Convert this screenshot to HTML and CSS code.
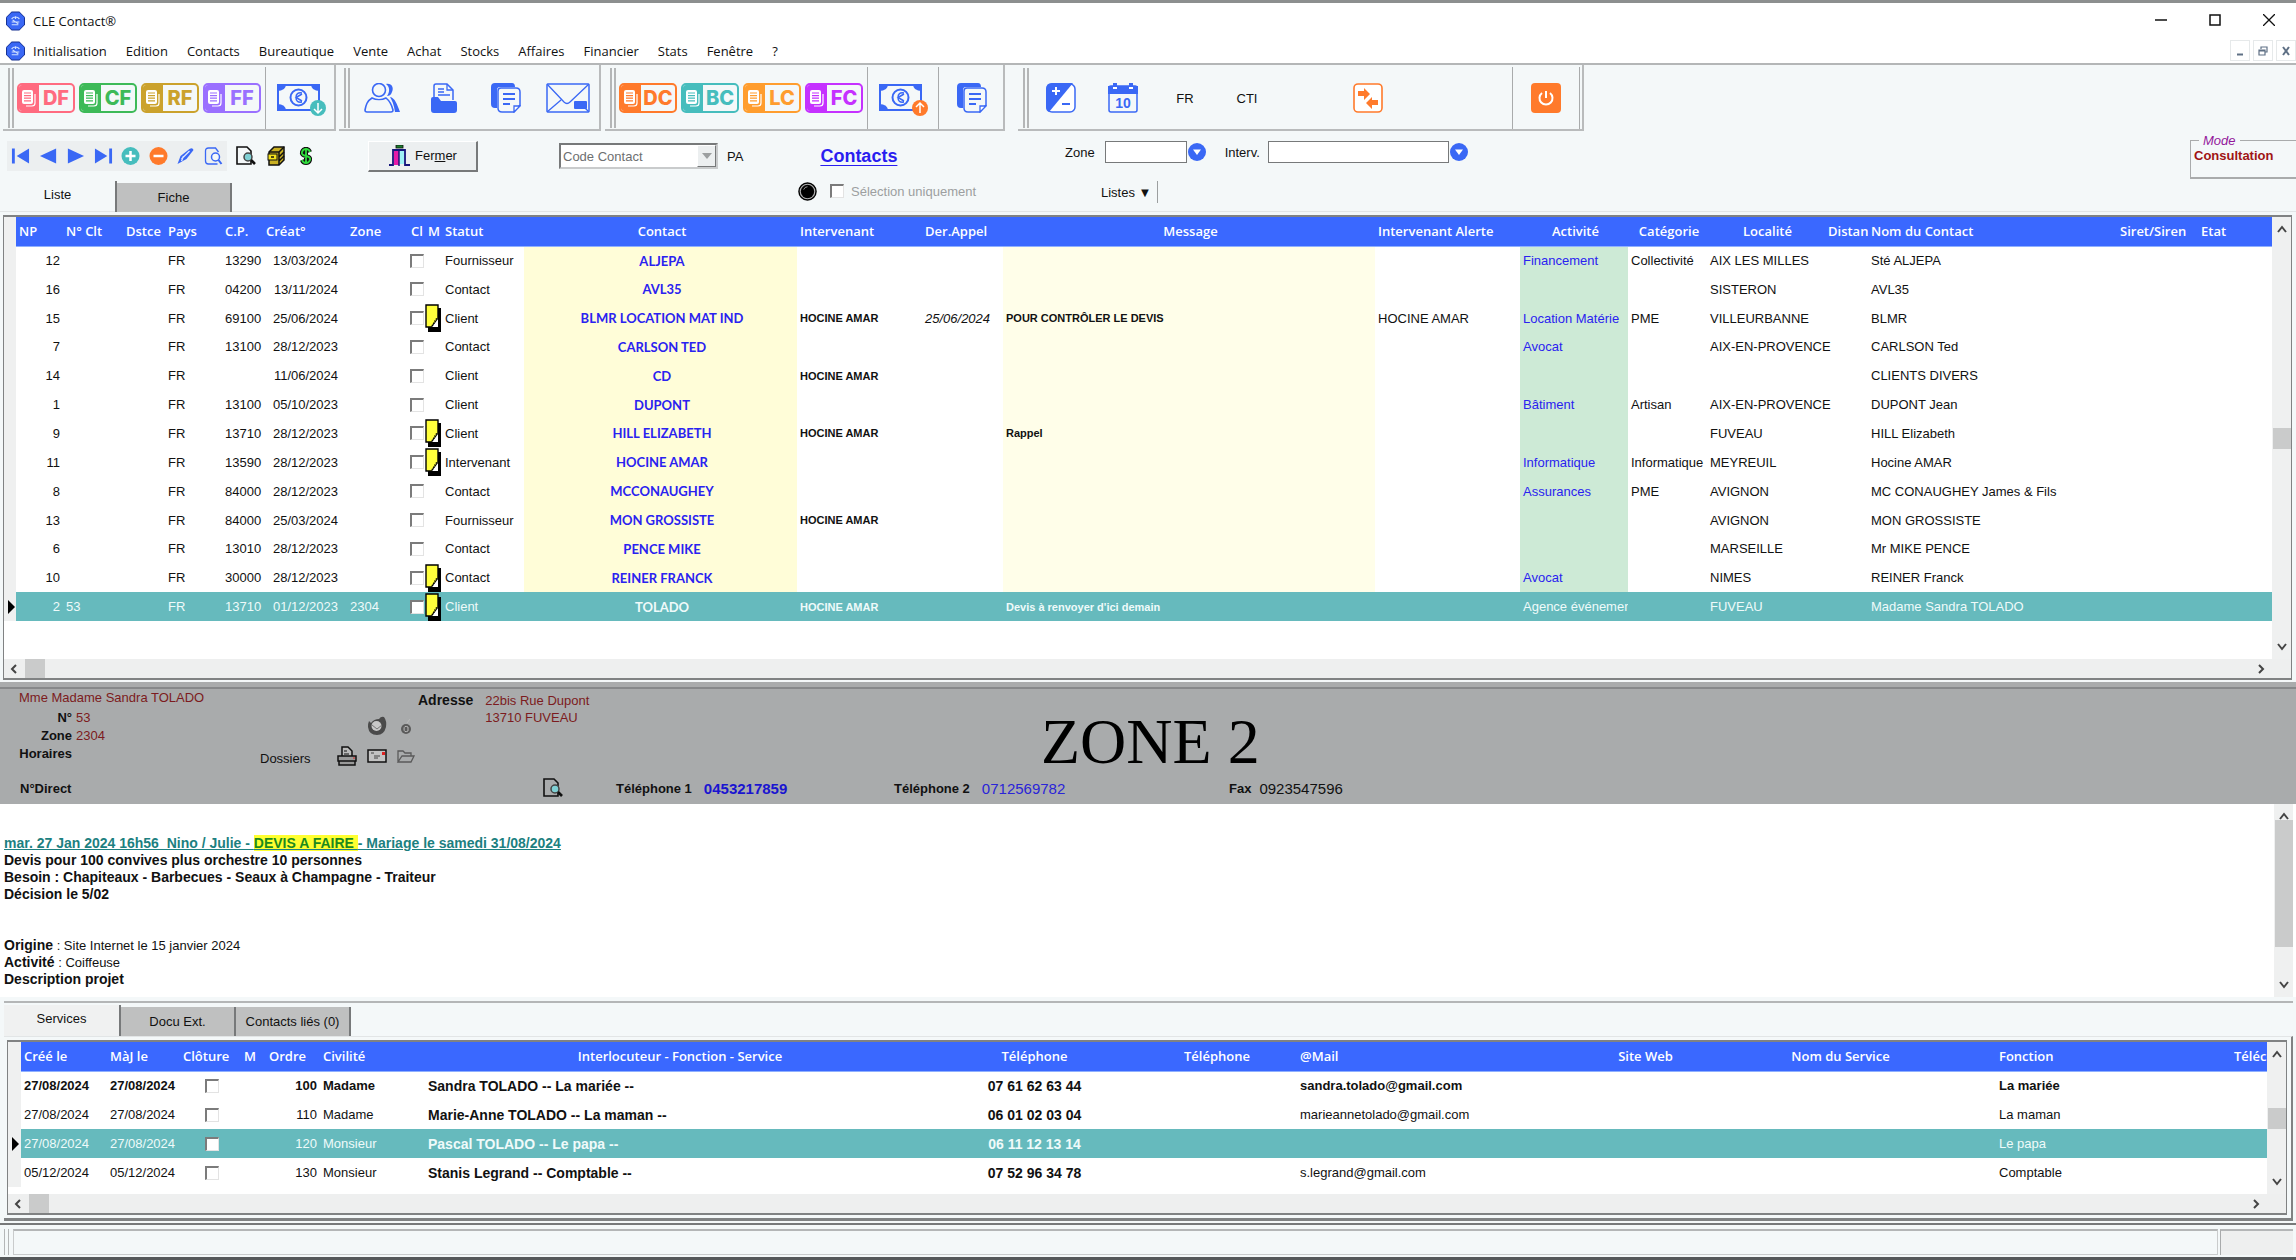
FILE: index.html
```html
<!DOCTYPE html>
<html lang="fr">
<head>
    <meta charset="UTF-8">
    <meta name="viewport" content="width=device-width, initial-scale=1.0">
    <title>CLE Contact</title>
    <link rel="stylesheet" href="styles.css">
</head>
<body>
    <!-- Icônes partagées -->
    <svg class="sprite" aria-hidden="true">
        <symbol id="i-app" viewBox="0 0 20 20">
            <path d="M6 0h8l6 6v8l-6 6H6l-6-6V6z" fill="#16308f"/>
            <path d="M6 1h8l5 5v8l-5 5H6l-5-5V6z" fill="#3a68f5"/>
            <path d="M6 8c1-3 7-3 8 0M6 11h8M6 14h7M7 9l6 4M10 5v3" fill="none" stroke="#cfe0ff" stroke-width="1.2"/>
        </symbol>
        <symbol id="i-doc" viewBox="0 0 14 17">
            <path d="M4 16h6q3 0 3-3V4" fill="none" stroke="#fff" stroke-width="1.200"/>
            <rect x="0" y="0" width="11" height="14" rx="2" fill="#fff"/>
            <path d="M2 3h7M2 5.600h7M2 8.200h7M2 10.800h7" stroke="currentColor" stroke-width="1.200"/>
        </symbol>
        <symbol id="i-money" viewBox="0 0 50 34">
            <rect x="2" y="2" width="41" height="25" fill="none" stroke="#3a68f5" stroke-width="2"/>
            <path d="M1 1h9q0 7-9 7zM44 1h-9q0 7 9 7zM1 28h9q0-7-9-7zM44 28h-9q0-7 9-7z" fill="#3a68f5"/>
            <circle cx="22.500" cy="14.500" r="8" fill="none" stroke="#3a68f5" stroke-width="2"/>
            <path d="M26 10q-6-1-6 4.500t6 4.500M26 11l-6 3.500 6 3.500" fill="none" stroke="#3a68f5" stroke-width="1.500"/>
        </symbol>
        <symbol id="i-people" viewBox="0 0 36 30">
            <path d="M22 1c6-1 8 4 6 8-1 3-3 4-5 4 3-4 3-9-1-12zM26 14c5 1 7 7 10 15h-5c-1-7-3-12-5-15z" fill="#3a68f5"/>
            <circle cx="15" cy="7" r="6.500" fill="#f4f8f9" stroke="#3a68f5" stroke-width="1.600"/>
            <path d="M8 15c4 2 10 2 14 0 5 4 6 8 7 12q0 2-2 2H3q-2 0-2-2c1-5 2-9 7-12z" fill="#f4f8f9" stroke="#3a68f5" stroke-width="1.600"/>
        </symbol>
        <symbol id="i-folder" viewBox="0 0 26 30">
            <path d="M3 16V3q0-2 2-2h11l6 6v10" fill="none" stroke="#3a68f5" stroke-width="1.500"/>
            <path d="M16 1v6h6M7 6h6M7 9h6M7 12h12" fill="none" stroke="#3a68f5" stroke-width="1.300"/>
            <path d="M0 16q0-2 2-2h5l3 4h14q2 0 2 2v7q0 3-3 3H3q-3 0-3-3z" fill="#3a68f5"/>
        </symbol>
        <symbol id="i-docs" viewBox="0 0 30 30">
            <path d="M4 0h17q3 0 3 4H9Q6 4 6 7v18H4q-4 0-4-4V4q0-4 4-4z" fill="#3a68f5"/>
            <path d="M10 5h15q4 0 4 4v13l-6 7H11q-4 0-4-4V8q0-3 3-3z" fill="#f4f8f9" stroke="#3a68f5" stroke-width="1.500"/>
            <path d="M12 11h12M12 16h12M12 21h7" stroke="#3a68f5" stroke-width="2"/>
            <path d="M23 29v-6h6z" fill="#fff" stroke="#3a68f5" stroke-width="1.300"/>
        </symbol>
        <symbol id="i-mail" viewBox="0 0 44 30">
            <rect x="1" y="1" width="42" height="28" rx="1" fill="none" stroke="#3a68f5" stroke-width="1.500"/>
            <path d="M1 1l17 18q3 3 6 0L43 1M1 29l14-12M43 29l-4-4" fill="none" stroke="#3a68f5" stroke-width="1.300"/>
            <rect x="28" y="18" width="13" height="8" rx="1" fill="#3a68f5"/>
        </symbol>
        <symbol id="i-calc" viewBox="0 0 30 30">
            <rect x="1" y="1" width="28" height="28" rx="5" fill="#fff" stroke="#3a68f5" stroke-width="1.500"/>
            <path d="M6 0h21L3 29Q0 28 0 24V6q0-6 6-6z" fill="#3a68f5"/>
            <path d="M6 8h8M10 4v8" stroke="#fff" stroke-width="2"/>
            <path d="M16 21h8" stroke="#3a68f5" stroke-width="2"/>
        </symbol>
        <symbol id="i-calendar" viewBox="0 0 30 30">
            <rect x="1" y="3" width="28" height="26" rx="2" fill="#f4f8f9" stroke="#3a68f5" stroke-width="1.500"/>
            <path d="M0 3h30v8H0zM5 0h4v5H5zM21 0h4v5h-4z" fill="#3a68f5"/>
            <path d="M5 4h4v2H5zM21 4h4v2h-4z" fill="#fff"/>
        </symbol>
        <symbol id="i-transfer" viewBox="0 0 30 30">
            <rect x="1" y="1" width="28" height="28" rx="4" fill="#fff" stroke="#ff7a2b" stroke-width="1.600"/>
            <path d="M5 8h6V5l6 6-6 6v-4H5zM25 17h-6v-3l-6 6 6 6v-4h6z" fill="#ff7a2b"/>
        </symbol>
        <symbol id="i-power" viewBox="0 0 30 30">
            <rect width="30" height="30" rx="4" fill="#ff7a2b"/>
            <path d="M11 10a6.500 6.500 0 1 0 8 0M15 8v7" fill="none" stroke="#fff" stroke-width="2"/>
        </symbol>
        <symbol id="i-first" viewBox="0 0 20 18"><path d="M1 1h3v16H1zM19 1v16L6 9z" fill="#3a68f5"/></symbol>
        <symbol id="i-prev" viewBox="0 0 20 18"><path d="M18 1v16L1 9z" fill="#3a68f5"/></symbol>
        <symbol id="i-next" viewBox="0 0 20 18"><path d="M2 1v16l17-8z" fill="#3a68f5"/></symbol>
        <symbol id="i-last" viewBox="0 0 20 18"><path d="M1 1v16l13-8zM16 1h3v16h-3z" fill="#3a68f5"/></symbol>
        <symbol id="i-plus" viewBox="0 0 18 18"><circle cx="9" cy="9" r="9" fill="#46bdbd"/><path d="M4 9h10M9 4v10" stroke="#fff" stroke-width="2.500"/></symbol>
        <symbol id="i-minus" viewBox="0 0 18 18"><circle cx="9" cy="9" r="9" fill="#ff7a2b"/><path d="M4 9h10" stroke="#fff" stroke-width="2.500"/></symbol>
        <symbol id="i-pen" viewBox="0 0 18 18">
            <path d="M1 17l3-8 9-7q3-2 4 1l-7 9z" fill="#3a68f5"/>
            <path d="M5 12l8-8M5 14l2-5" stroke="#dfe8ff" stroke-width="1.300"/>
        </symbol>
        <symbol id="i-find" viewBox="0 0 18 18">
            <path d="M14 5l-3-4H4Q1 1 1 4v10q0 3 3 3h9" fill="none" stroke="#3a68f5" stroke-width="1.300"/>
            <circle cx="11" cy="10" r="4" fill="#f4f8f9" stroke="#3a68f5" stroke-width="1.500"/>
            <path d="M14 13l3 4" stroke="#3a68f5" stroke-width="2"/>
        </symbol>
        <symbol id="i-preview" viewBox="0 0 20 20">
            <path d="M1 1h10l4 4v13H1z" fill="none" stroke="#111" stroke-width="1.600"/>
            <circle cx="12" cy="11" r="4" fill="#7fd0d4" stroke="#444" stroke-width="1.500"/>
            <path d="M15 14l4 4" stroke="#111" stroke-width="2.600"/>
        </symbol>
        <symbol id="i-cabinet" viewBox="0 0 18 20">
            <path d="M2 6l5-5h10v13l-5 5H2z" fill="#c9b022" stroke="#111" stroke-width="1.500"/>
            <path d="M12 6v13M12 6l5-5M2 6h10M12 11l5-5M12 15l5-5" fill="none" stroke="#111" stroke-width="1.500"/>
            <rect x="1" y="8" width="9" height="6" fill="#f5e21c" stroke="#111"/>
            <path d="M4 11h3" stroke="#111" stroke-width="1.500"/>
        </symbol>
        <symbol id="i-dollar" viewBox="0 0 14 20">
            <path d="M11 6Q10 3 7 3T3 6t4 4 4 4-4 3-4-3M7 1v18" fill="none" stroke="#111" stroke-width="4"/>
            <path d="M11 6Q10 3 7 3T3 6t4 4 4 4-4 3-4-3M7 2v16" fill="none" stroke="#2fdc3c" stroke-width="1.800"/>
        </symbol>
        <symbol id="i-door" viewBox="0 0 22 22">
            <rect x="8" y="0" width="7" height="3" fill="#1c7d2c" stroke="#111" stroke-width=".8"/>
            <path d="M1 20h4V5h12v15h5" fill="none" stroke="#15157c" stroke-width="1.800"/>
            <rect x="6" y="6" width="5" height="14" fill="#e51ba8"/>
            <rect x="12" y="6" width="4" height="13" fill="#9ff2f5"/>
            <path d="M11 5v16" stroke="#15157c" stroke-width="1.500"/>
        </symbol>
        <symbol id="i-drop" viewBox="0 0 18 18"><circle cx="9" cy="9" r="9" fill="#3a68f5"/><path d="M5 6.500h8L9 12z" fill="#fff"/></symbol>
        <symbol id="i-led" viewBox="0 0 20 20"><circle cx="10" cy="10" r="9" fill="#b0b0b0" stroke="#000" stroke-width="1.500"/><circle cx="10" cy="10" r="7" fill="#000"/><path d="M6 8q1-3 4-3" stroke="#999" fill="none"/></symbol>
        <symbol id="i-note" viewBox="0 0 16 28">
            <path d="M3 4h13v24H3z" fill="#000"/>
            <path d="M1 1h12v14L7 23H1z" fill="#ffff3c" stroke="#000" stroke-width="1.400"/>
            <path d="M7 23l6-8v8z" fill="#fff"/><path d="M7 22l5-8" stroke="#000" stroke-width="1.500" stroke-dasharray="1.500 1"/>
        </symbol>
        <symbol id="i-firebird" viewBox="0 0 20 20"><path d="M2 5l2 2q3-4 8-4 2-3 5-2 3 4 2 10-2 8-9 8-8 0-9-8 0-4 1-6z" fill="#4a4a4a"/><circle cx="9.500" cy="10" r="5" fill="#c9c9c9"/><path d="M5 9l5 4 5-4" fill="none" stroke="#777"/></symbol>
        <symbol id="i-at" viewBox="0 0 12 20"><circle cx="6" cy="13" r="5" fill="#5a5a5a"/><path d="M8 15q-4 2-4-2t4-2v4M7 7l3-4" fill="none" stroke="#bbb"/></symbol>
        <symbol id="i-print" viewBox="0 0 20 20"><path d="M5 10V1h6l4 4v5" fill="#bbb" stroke="#111" stroke-width="1.500"/><path d="M1 10h18v5H1zM2 15h16v4H2z" fill="#999" stroke="#111" stroke-width="1.500"/><path d="M7 5h3M7 8h5" stroke="#111"/><path d="M16 12h2" stroke="#d22"/></symbol>
        <symbol id="i-letter" viewBox="0 0 20 14"><rect x="1" y="1" width="18" height="12" fill="#c3c3c3" stroke="#111" stroke-width="1.500"/><path d="M4 4h3M7 7h6M7 9h4" stroke="#444"/><rect x="15" y="3" width="3" height="3" fill="#d22"/></symbol>
        <symbol id="i-open" viewBox="0 0 18 14"><path d="M1 13V2h5l2 2h6v3M1 13l4-6h12l-3 6z" fill="none" stroke="#5a5a5a" stroke-width="1.300"/></symbol>
        <symbol id="i-up" viewBox="0 0 10 8"><path d="M1 7l4-5 4 5" fill="none" stroke="#444" stroke-width="2"/></symbol>
        <symbol id="i-down" viewBox="0 0 10 8"><path d="M1 1l4 5 4-5" fill="none" stroke="#444" stroke-width="2"/></symbol>
        <symbol id="i-left" viewBox="0 0 8 10"><path d="M6 1L2 5l4 4" fill="none" stroke="#444" stroke-width="2"/></symbol>
        <symbol id="i-right" viewBox="0 0 8 10"><path d="M2 1l4 4-4 4" fill="none" stroke="#444" stroke-width="2"/></symbol>
    </svg>

    <!-- Barre de titre -->
    <header class="title-bar">
        <svg class="app-icon"><use href="#i-app"/></svg>
        <span class="title">CLE Contact®</span>
        <div class="win-btns">
            <button aria-label="Réduire"><svg viewBox="0 0 12 12"><path d="M0 6h12" stroke="#111" stroke-width="1.500"/></svg></button>
            <button aria-label="Agrandir"><svg viewBox="0 0 12 12"><path d="M1 1h10v10H1z" fill="none" stroke="#111" stroke-width="1.500"/></svg></button>
            <button aria-label="Fermer la fenêtre"><svg viewBox="0 0 12 12"><path d="M0 0l12 12M12 0L0 12" stroke="#111" stroke-width="1.300"/></svg></button>
        </div>
    </header>

    <!-- Menu principal -->
    <nav class="menu-bar">
        <svg class="app-icon"><use href="#i-app"/></svg>
        <a href="#">Initialisation</a>
        <a href="#">Edition</a>
        <a href="#">Contacts</a>
        <a href="#">Bureautique</a>
        <a href="#">Vente</a>
        <a href="#">Achat</a>
        <a href="#">Stocks</a>
        <a href="#">Affaires</a>
        <a href="#">Financier</a>
        <a href="#">Stats</a>
        <a href="#">Fenêtre</a>
        <a href="#">?</a>
        <div class="mdi-btns">
            <button aria-label="Réduire le document"><svg viewBox="0 0 10 10"><path d="M2 8.500h6" stroke="#5f7085" stroke-width="2"/></svg></button>
            <button aria-label="Restaurer le document"><svg viewBox="0 0 10 10"><path d="M3 3V1h6v5H7M1 4h6v5H1zM1 5h6" fill="none" stroke="#5f7085" stroke-width="1.200"/></svg></button>
            <button aria-label="Fermer le document"><svg viewBox="0 0 10 10"><path d="M2 1l6 8M8 1L2 9" stroke="#5f7085" stroke-width="2"/></svg></button>
        </div>
    </nav>

    <!-- Barres d'outils -->
    <div class="toolbars">
        <div class="band band-fourn">
            <button class="tool badge red"><span><svg><use href="#i-doc"/></svg></span><b>DF</b></button>
            <button class="tool badge green"><span><svg><use href="#i-doc"/></svg></span><b>CF</b></button>
            <button class="tool badge gold"><span><svg><use href="#i-doc"/></svg></span><b>RF</b></button>
            <button class="tool badge violet"><span><svg><use href="#i-doc"/></svg></span><b>FF</b></button>
            <i class="sep"></i>
            <button class="tool wide" aria-label="Décaissement"><svg class="money" viewBox="0 0 50 34"><use href="#i-money" width="50" height="34"/><circle cx="42" cy="25" r="8" fill="#46bdbd"/><path d="M42 20v9M38 26l4 4 4-4" fill="none" stroke="#fff" stroke-width="1.500"/></svg></button>
        </div>
        <div class="band band-bureau">
            <button class="tool" aria-label="Contacts"><svg class="ic36"><use href="#i-people"/></svg></button>
            <button class="tool" aria-label="Dossiers"><svg class="ic26"><use href="#i-folder"/></svg></button>
            <button class="tool" aria-label="Documents"><svg class="ic30"><use href="#i-docs"/></svg></button>
            <button class="tool" aria-label="Messagerie"><svg class="ic44"><use href="#i-mail"/></svg></button>
        </div>
        <div class="band band-client">
            <button class="tool badge orange"><span><svg><use href="#i-doc"/></svg></span><b>DC</b></button>
            <button class="tool badge teal"><span><svg><use href="#i-doc"/></svg></span><b>BC</b></button>
            <button class="tool badge amber"><span><svg><use href="#i-doc"/></svg></span><b>LC</b></button>
            <button class="tool badge magenta"><span><svg><use href="#i-doc"/></svg></span><b>FC</b></button>
            <i class="sep"></i>
            <button class="tool wide" aria-label="Encaissement"><svg class="money" viewBox="0 0 50 34"><use href="#i-money" width="50" height="34"/><circle cx="42" cy="25" r="8" fill="#ff7a2b"/><path d="M42 30v-9M38 24l4-4 4 4" fill="none" stroke="#fff" stroke-width="1.500"/></svg></button>
            <i class="sep"></i>
            <button class="tool" aria-label="Pièces"><svg class="ic30"><use href="#i-docs"/></svg></button>
        </div>
        <div class="band band-divers">
            <button class="tool" aria-label="Calculatrice"><svg class="ic30"><use href="#i-calc"/></svg></button>
            <button class="tool cal" aria-label="Agenda"><svg class="ic30"><use href="#i-calendar"/></svg><span>10</span></button>
            <button class="tool">FR</button>
            <button class="tool">CTI</button>
            <button class="tool transfer" aria-label="Transfert"><svg class="ic30"><use href="#i-transfer"/></svg></button>
            <i class="sep"></i>
            <button class="tool power" aria-label="Quitter"><svg class="ic30"><use href="#i-power"/></svg></button>
            <i class="sep"></i>
        </div>
    </div>

    <!-- Navigation et filtres -->
    <div class="controls">
        <div class="col-nav">
            <div class="nav-row">
                <div class="navigator">
                    <button aria-label="Premier"><svg><use href="#i-first"/></svg></button>
                    <button aria-label="Précédent"><svg><use href="#i-prev"/></svg></button>
                    <button aria-label="Suivant"><svg><use href="#i-next"/></svg></button>
                    <button aria-label="Dernier"><svg><use href="#i-last"/></svg></button>
                    <button aria-label="Ajouter"><svg><use href="#i-plus"/></svg></button>
                    <button aria-label="Supprimer"><svg><use href="#i-minus"/></svg></button>
                    <button aria-label="Modifier"><svg><use href="#i-pen"/></svg></button>
                    <button aria-label="Rechercher"><svg><use href="#i-find"/></svg></button>
                </div>
                <div class="extra">
                    <button aria-label="Aperçu"><svg><use href="#i-preview"/></svg></button>
                    <button aria-label="Archives"><svg><use href="#i-cabinet"/></svg></button>
                    <button aria-label="Comptes"><svg><use href="#i-dollar"/></svg></button>
                </div>
                <button class="fermer"><svg><use href="#i-door"/></svg><span>Fer<u>m</u>er</span></button>
            </div>
            <div class="tabs">
                <button class="tab active">Liste</button>
                <button class="tab">Fiche</button>
            </div>
        </div>
        <div class="col-code">
            <div class="code-row">
                <div class="combo">
                    <select aria-label="Code" disabled><option>Code Contact</option></select>
                    <i></i>
                </div>
                <span>PA</span>
                <a class="page-link" href="#">Contacts</a>
            </div>
            <div class="selection">
                <svg class="led"><use href="#i-led"/></svg>
                <input type="checkbox" class="box" id="selOnly" disabled>
                <label for="selOnly">Sélection uniquement</label>
            </div>
        </div>
        <div class="col-filter">
            <div class="filter-row">
                <label for="zone">Zone</label>
                <input type="text" id="zone" class="in-zone">
                <button class="drop" aria-label="Choisir la zone"><svg><use href="#i-drop"/></svg></button>
                <label for="interv" class="lab-interv">Interv.</label>
                <input type="text" id="interv" class="in-interv">
                <button class="drop" aria-label="Choisir l'intervenant"><svg><use href="#i-drop"/></svg></button>
            </div>
            <button class="listes">Listes ▼</button>
        </div>
        <fieldset class="mode">
            <legend>Mode</legend>
            <strong>Consultation</strong>
        </fieldset>
    </div>

    <!-- Liste des contacts -->
    <section class="grid-box list-box">
        <div class="grid-main">
            <div class="grid-view">
                <table class="grid contacts">
                    <colgroup>
                        <col class="w12"><col class="w47"><col class="w60"><col class="w42"><col class="w57"><col class="w41"><col class="w84"><col class="w61"><col class="w17"><col class="w17"><col class="w82"><col class="w273"><col class="w125"><col class="w81"><col class="w372"><col class="w145"><col class="w108"><col class="w79"><col class="w118"><col class="w43"><col class="w249"><col class="w81"><col>
                    </colgroup>
                    <thead>
                        <tr><th></th><th>NP</th><th>N° Clt</th><th>Dstce</th><th>Pays</th><th>C.P.</th><th>Créat°</th><th>Zone</th><th>Cl</th><th>M</th><th>Statut</th><th>Contact</th><th>Intervenant</th><th>Der.Appel</th><th>Message</th><th>Intervenant Alerte</th><th>Activité</th><th>Catégorie</th><th>Localité</th><th>Distan</th><th>Nom du Contact</th><th>Siret/Siren</th><th>Etat</th></tr>
                    </thead>
                    <tbody>
                        <tr><td></td><td>12</td><td></td><td></td><td>FR</td><td>13290</td><td>13/03/2024</td><td></td><td><input type="checkbox" class="box" aria-label="Clôturé"></td><td></td><td>Fournisseur</td><td>ALJEPA</td><td></td><td></td><td></td><td></td><td>Financement</td><td>Collectivité</td><td>AIX LES MILLES</td><td></td><td>Sté ALJEPA</td><td></td><td></td></tr>
                        <tr><td></td><td>16</td><td></td><td></td><td>FR</td><td>04200</td><td>13/11/2024</td><td></td><td><input type="checkbox" class="box" aria-label="Clôturé"></td><td></td><td>Contact</td><td>AVL35</td><td></td><td></td><td></td><td></td><td></td><td></td><td>SISTERON</td><td></td><td>AVL35</td><td></td><td></td></tr>
                        <tr><td></td><td>15</td><td></td><td></td><td>FR</td><td>69100</td><td>25/06/2024</td><td></td><td><input type="checkbox" class="box" aria-label="Clôturé"></td><td><svg><use href="#i-note"/></svg></td><td>Client</td><td>BLMR LOCATION MAT IND</td><td>HOCINE AMAR</td><td>25/06/2024</td><td>POUR CONTRÔLER LE DEVIS</td><td>HOCINE AMAR</td><td>Location Matérie</td><td>PME</td><td>VILLEURBANNE</td><td></td><td>BLMR</td><td></td><td></td></tr>
                        <tr><td></td><td>7</td><td></td><td></td><td>FR</td><td>13100</td><td>28/12/2023</td><td></td><td><input type="checkbox" class="box" aria-label="Clôturé"></td><td></td><td>Contact</td><td>CARLSON TED</td><td></td><td></td><td></td><td></td><td>Avocat</td><td></td><td>AIX-EN-PROVENCE</td><td></td><td>CARLSON Ted</td><td></td><td></td></tr>
                        <tr><td></td><td>14</td><td></td><td></td><td>FR</td><td></td><td>11/06/2024</td><td></td><td><input type="checkbox" class="box" aria-label="Clôturé"></td><td></td><td>Client</td><td>CD</td><td>HOCINE AMAR</td><td></td><td></td><td></td><td></td><td></td><td></td><td></td><td>CLIENTS DIVERS</td><td></td><td></td></tr>
                        <tr><td></td><td>1</td><td></td><td></td><td>FR</td><td>13100</td><td>05/10/2023</td><td></td><td><input type="checkbox" class="box" aria-label="Clôturé"></td><td></td><td>Client</td><td>DUPONT</td><td></td><td></td><td></td><td></td><td>Bâtiment</td><td>Artisan</td><td>AIX-EN-PROVENCE</td><td></td><td>DUPONT Jean</td><td></td><td></td></tr>
                        <tr><td></td><td>9</td><td></td><td></td><td>FR</td><td>13710</td><td>28/12/2023</td><td></td><td><input type="checkbox" class="box" aria-label="Clôturé"></td><td><svg><use href="#i-note"/></svg></td><td>Client</td><td>HILL ELIZABETH</td><td>HOCINE AMAR</td><td></td><td>Rappel</td><td></td><td></td><td></td><td>FUVEAU</td><td></td><td>HILL Elizabeth</td><td></td><td></td></tr>
                        <tr><td></td><td>11</td><td></td><td></td><td>FR</td><td>13590</td><td>28/12/2023</td><td></td><td><input type="checkbox" class="box" aria-label="Clôturé"></td><td><svg><use href="#i-note"/></svg></td><td>Intervenant</td><td>HOCINE AMAR</td><td></td><td></td><td></td><td></td><td>Informatique</td><td>Informatique</td><td>MEYREUIL</td><td></td><td>Hocine AMAR</td><td></td><td></td></tr>
                        <tr><td></td><td>8</td><td></td><td></td><td>FR</td><td>84000</td><td>28/12/2023</td><td></td><td><input type="checkbox" class="box" aria-label="Clôturé"></td><td></td><td>Contact</td><td>MCCONAUGHEY</td><td></td><td></td><td></td><td></td><td>Assurances</td><td>PME</td><td>AVIGNON</td><td></td><td>MC CONAUGHEY James &amp; Fils</td><td></td><td></td></tr>
                        <tr><td></td><td>13</td><td></td><td></td><td>FR</td><td>84000</td><td>25/03/2024</td><td></td><td><input type="checkbox" class="box" aria-label="Clôturé"></td><td></td><td>Fournisseur</td><td>MON GROSSISTE</td><td>HOCINE AMAR</td><td></td><td></td><td></td><td></td><td></td><td>AVIGNON</td><td></td><td>MON GROSSISTE</td><td></td><td></td></tr>
                        <tr><td></td><td>6</td><td></td><td></td><td>FR</td><td>13010</td><td>28/12/2023</td><td></td><td><input type="checkbox" class="box" aria-label="Clôturé"></td><td></td><td>Contact</td><td>PENCE MIKE</td><td></td><td></td><td></td><td></td><td></td><td></td><td>MARSEILLE</td><td></td><td>Mr MIKE PENCE</td><td></td><td></td></tr>
                        <tr><td></td><td>10</td><td></td><td></td><td>FR</td><td>30000</td><td>28/12/2023</td><td></td><td><input type="checkbox" class="box" aria-label="Clôturé"></td><td><svg><use href="#i-note"/></svg></td><td>Contact</td><td>REINER FRANCK</td><td></td><td></td><td></td><td></td><td>Avocat</td><td></td><td>NIMES</td><td></td><td>REINER Franck</td><td></td><td></td></tr>
                        <tr class="selected"><td><i class="cursor"></i></td><td>2</td><td>53</td><td></td><td>FR</td><td>13710</td><td>01/12/2023</td><td>2304</td><td><input type="checkbox" class="box" aria-label="Clôturé"></td><td><svg><use href="#i-note"/></svg></td><td>Client</td><td>TOLADO</td><td>HOCINE AMAR</td><td></td><td>Devis à renvoyer d'ici demain</td><td></td><td>Agence événementielle</td><td></td><td>FUVEAU</td><td></td><td>Madame Sandra TOLADO</td><td></td><td></td></tr>
                    </tbody>
                </table>
            </div>
            <div class="vbar"><svg><use href="#i-up"/></svg><i class="thumb mid"></i><svg><use href="#i-down"/></svg></div>
        </div>
        <div class="hbar"><svg><use href="#i-left"/></svg><i class="thumb"></i><svg><use href="#i-right"/></svg></div>
    </section>

    <!-- Zone 2 : détail du contact -->
    <section class="detail">
        <div class="detail-top">
            <div class="ident">
                <p class="nom">Mme Madame Sandra TOLADO</p>
                <dl>
                    <dt>N°</dt><dd>53</dd>
                    <dt>Zone</dt><dd>2304</dd>
                    <dt>Horaires</dt><dd></dd>
                </dl>
            </div>
            <div class="dossiers">
                <span>Dossiers</span>
                <div class="dossier-icons">
                    <i></i>
                    <svg><use href="#i-firebird"/></svg>
                    <svg><use href="#i-at"/></svg>
                    <svg><use href="#i-print"/></svg>
                    <svg class="low"><use href="#i-letter"/></svg>
                    <svg class="low"><use href="#i-open"/></svg>
                </div>
            </div>
            <div class="adresse">
                <b>Adresse</b>
                <address>22bis Rue Dupont<br>13710 FUVEAU</address>
            </div>
            <h1 class="zone-title">ZONE 2</h1>
        </div>
        <div class="phones">
            <b>N°Direct</b>
            <svg><use href="#i-preview"/></svg>
            <p><b>Téléphone 1</b><span class="tel strong">0453217859</span></p>
            <p><b>Téléphone 2</b><span class="tel">0712569782</span></p>
            <p><b>Fax</b><span class="fax">0923547596</span></p>
        </div>
    </section>

    <!-- Bloc-notes -->
    <section class="notes">
        <div class="notes-text">
            <p class="note-title">mar. 27 Jan 2024 16h56&nbsp; Nino / Julie - <mark>DEVIS A FAIRE </mark>- Mariage le samedi 31/08/2024</p>
            <p><b>Devis pour 100 convives plus orchestre 10 personnes</b></p>
            <p><b>Besoin : Chapiteaux - Barbecues - Seaux à Champagne - Traiteur</b></p>
            <p><b>Décision le 5/02</b></p>
            <br>
            <br>
            <p><b>Origine</b> : Site Internet le 15 janvier 2024</p>
            <p><b>Activité</b> : Coiffeuse</p>
            <p><b>Description projet</b></p>
        </div>
        <div class="vbar"><svg><use href="#i-up"/></svg><i class="thumb tall"></i><svg><use href="#i-down"/></svg></div>
    </section>

    <!-- Services liés -->
    <section class="services">
        <div class="tabs">
            <button class="tab active">Services</button>
            <button class="tab">Docu Ext.</button>
            <button class="tab">Contacts liés (0)</button>
        </div>
        <div class="services-panel">
            <div class="grid-box">
                <div class="grid-main">
                    <div class="grid-view">
                        <table class="grid interlocuteurs">
                            <colgroup>
                                <col class="w13"><col class="w86"><col class="w73"><col class="w61"><col class="w25"><col class="w54"><col class="w105"><col class="w507"><col class="w202"><col class="w163"><col class="w309"><col class="w76"><col class="w314"><col class="w235"><col>
                            </colgroup>
                            <thead>
                                <tr><th></th><th>Créé le</th><th>MàJ le</th><th>Clôture</th><th>M</th><th>Ordre</th><th>Civilité</th><th>Interlocuteur - Fonction - Service</th><th>Téléphone</th><th>Téléphone</th><th>@Mail</th><th>Site Web</th><th>Nom du Service</th><th>Fonction</th><th>Télécopie</th></tr>
                            </thead>
                            <tbody>
                                <tr class="principal"><td></td><td>27/08/2024</td><td>27/08/2024</td><td><input type="checkbox" class="box" aria-label="Clôture"></td><td></td><td>100</td><td>Madame</td><td>Sandra TOLADO -- La mariée --</td><td>07 61 62 63 44</td><td></td><td>sandra.tolado@gmail.com</td><td></td><td></td><td>La mariée</td><td></td></tr>
                                <tr><td></td><td>27/08/2024</td><td>27/08/2024</td><td><input type="checkbox" class="box" aria-label="Clôture"></td><td></td><td>110</td><td>Madame</td><td>Marie-Anne TOLADO -- La maman --</td><td>06 01 02 03 04</td><td></td><td>marieannetolado@gmail.com</td><td></td><td></td><td>La maman</td><td></td></tr>
                                <tr class="selected"><td><i class="cursor"></i></td><td>27/08/2024</td><td>27/08/2024</td><td><input type="checkbox" class="box" aria-label="Clôture"></td><td></td><td>120</td><td>Monsieur</td><td>Pascal TOLADO -- Le papa --</td><td>06 11 12 13 14</td><td></td><td></td><td></td><td></td><td>Le papa</td><td></td></tr>
                                <tr><td></td><td>05/12/2024</td><td>05/12/2024</td><td><input type="checkbox" class="box" aria-label="Clôture"></td><td></td><td>130</td><td>Monsieur</td><td>Stanis Legrand -- Comptable --</td><td>07 52 96 34 78</td><td></td><td>s.legrand@gmail.com</td><td></td><td></td><td>Comptable</td><td></td></tr>
                            </tbody>
                        </table>
                    </div>
                    <div class="vbar"><svg><use href="#i-up"/></svg><i class="thumb mid"></i><svg><use href="#i-down"/></svg></div>
                </div>
                <div class="hbar"><svg><use href="#i-left"/></svg><i class="thumb"></i><svg><use href="#i-right"/></svg></div>
            </div>
        </div>
    </section>

    <!-- Barre d'état -->
    <footer class="status-bar">
        <div class="status-main"></div>
        <div class="status-side"></div>
    </footer>
</body>
</html>
```

FILE: styles.css
```css
* {
    box-sizing: border-box;
}
body {
    margin: 0;
    height: 100vh;
    display: flex;
    flex-direction: column;
    background: #f4f8f9;
    border-top: 3px solid #8c8f8f;
    border-bottom: 3px solid #55585a;
    font-family: "Liberation Sans", Arial, sans-serif;
    font-size: 13px;
    color: #111;
    overflow: hidden;
}
p, dl, dd, h1 {
    margin: 0;
}
button {
    font: inherit;
    color: inherit;
    background: none;
    border: none;
    padding: 0;
}
.sprite {
    display: none;
}

/* titre et menu */
.title-bar, .menu-bar {
    display: flex;
    align-items: center;
    background: #fff;
    padding-left: 6px;
    font-family: "Open Sans", sans-serif;
}
.title-bar {
    height: 35px;
}
.app-icon {
    width: 19px;
    height: 20px;
    margin-right: 8px;
}
.win-btns, .mdi-btns {
    display: flex;
    margin-left: auto;
}
.win-btns button {
    width: 54px;
    height: 34px;
}
.win-btns svg {
    width: 12px;
    height: 12px;
}
.menu-bar {
    height: 27px;
    border-bottom: 2px solid #b4b6b7;
    gap: 19px;
}
.menu-bar .app-icon {
    margin-right: -11px;
}
.menu-bar a {
    color: #111;
    text-decoration: none;
}
.mdi-btns {
    gap: 3px;
}
.mdi-btns button {
    width: 20px;
    height: 21px;
    border: 1px solid #e6e9ea;
}
.mdi-btns svg {
    width: 10px;
    height: 10px;
}

/* barres d'outils */
.toolbars {
    display: flex;
    height: 66px;
}
.band {
    display: flex;
    align-items: center;
    border-right: 2px solid #b9bbbc;
    border-bottom: 2px solid #b9bbbc;
    padding-left: 5px;
    padding-top: 2px;
    margin-left: 3px;
}
.band::before {
    content: "";
    width: 2px;
    height: 60px;
    margin-right: 1px;
    border-left: 2px solid #b4b6b7;
    border-right: 2px solid #b4b6b7;
}
.band-client {
    margin-left: 4px;
}
.band-divers {
    margin-left: 13px;
}
.tool {
    width: 62px;
    height: 60px;
    display: flex;
    align-items: center;
    justify-content: center;
}
.tool.wide {
    width: 66px;
}
.sep {
    width: 1px;
    height: 62px;
    background: #a9abac;
    margin: 0 2px;
}
.money {
    width: 50px;
    height: 34px;
    margin-top: 4px;
}
.ic26 {
    width: 26px;
    height: 30px;
}
.ic30 {
    width: 30px;
    height: 30px;
}
.ic36 {
    width: 36px;
    height: 30px;
}
.ic44 {
    width: 44px;
    height: 30px;
}
.badge {
    width: 58px;
    height: 30px;
    margin: 0 2px;
    border: 2px solid currentColor;
    border-radius: 5px;
    overflow: hidden;
}
.badge span {
    width: 20px;
    height: 30px;
    flex: none;
    display: flex;
    align-items: center;
    justify-content: center;
    background: currentColor;
}
.badge svg {
    width: 14px;
    height: 17px;
}
.badge b {
    flex: 1;
    text-align: center;
    font-family: Inter, sans-serif;
    font-size: 20px;
    font-weight: 800;
}
.red { color: #ff6b80; }
.green { color: #3dba58; }
.gold { color: #cba22c; }
.violet { color: #9a70ff; }
.orange { color: #ff7a2b; }
.teal { color: #46bdbd; }
.amber { color: #ff9d2e; }
.magenta { color: #c531ff; }
.cal {
    position: relative;
}
.cal span {
    position: absolute;
    top: 27px;
    font-size: 14px;
    font-weight: bold;
    color: #3a68f5;
}
.transfer {
    margin-left: 59px;
    margin-right: 111px;
}

/* navigation et filtres */
.controls {
    display: flex;
    height: 81px;
    border-bottom: 1px solid #e2e5e6;
}
.col-nav {
    width: 559px;
}
.nav-row {
    display: flex;
    align-items: center;
    height: 50px;
    padding-left: 7px;
}
.navigator {
    display: flex;
    align-items: center;
    height: 30px;
    width: 220px;
    background: #eceff0;
}
.navigator button {
    flex: 1;
}
.navigator svg {
    width: 19px;
    height: 18px;
    display: block;
    margin: 0 auto;
}
.extra {
    display: flex;
    gap: 10px;
    margin-left: 9px;
}
.extra svg {
    width: 20px;
    height: 20px;
    display: block;
}
.fermer {
    display: flex;
    align-items: center;
    justify-content: center;
    gap: 5px;
    width: 110px;
    height: 31px;
    margin-left: 52px;
    background: #eceff0;
    border: 1px solid #fff;
    border-right: 2px solid #77797a;
    border-bottom: 2px solid #77797a;
}
.fermer svg {
    width: 22px;
    height: 22px;
}
.tabs {
    display: flex;
    align-items: flex-end;
    height: 31px;
}
.tab {
    width: 115px;
    height: 29px;
    background: #bfc0c0;
    border-right: 2px solid #77797a;
}
.tab.active {
    width: 117px;
    height: 31px;
    background: none;
    padding-bottom: 4px;
}
.col-code {
    width: 506px;
}
.code-row {
    display: flex;
    align-items: center;
    height: 50px;
}
.combo {
    display: flex;
    width: 159px;
    height: 26px;
    margin-right: 9px;
    background: #fff;
    border: 2px solid #77797a;
    border-right-color: #c9cbcc;
    border-bottom-color: #c9cbcc;
}
.combo select {
    appearance: none;
    flex: 1;
    padding: 0 2px;
    font: inherit;
    color: #6d6f70;
    background: none;
    border: none;
    opacity: 1;
}
.combo i {
    display: flex;
    align-items: center;
    justify-content: center;
    width: 19px;
    background: #eceff0;
    border: 1px solid #fff;
    border-right-color: #77797a;
    border-bottom-color: #77797a;
}
.combo i::after {
    content: "";
    border: 5px solid transparent;
    border-top: 6px solid #9c9fa0;
    border-bottom: none;
}
.page-link {
    margin-left: 77px;
    font-size: 18px;
    font-weight: bold;
    color: #2a1df0;
    text-underline-offset: 3px;
}
.selection {
    display: flex;
    align-items: center;
    margin-left: 239px;
    height: 20px;
    color: #9c9fa0;
}
.led {
    width: 19px;
    height: 19px;
    margin-right: 13px;
}
.selection label {
    margin-left: 7px;
}
.box {
    appearance: none;
    display: block;
    flex: none;
    width: 14px;
    height: 14px;
    margin: 0;
    background: #fff;
    border: 1px solid #e3e3e3;
    border-top: 2px solid #7b7b7b;
    border-left: 2px solid #7b7b7b;
}
.filter-row {
    display: flex;
    align-items: center;
    height: 22px;
    margin-top: 10px;
}
.filter-row input {
    height: 22px;
    padding: 0 3px;
    border: 1px solid #77797a;
    font: inherit;
}
.in-zone {
    width: 82px;
    margin-left: 10px;
}
.in-interv {
    width: 181px;
    margin-left: 8px;
}
.lab-interv {
    margin-left: 19px;
}
.drop svg {
    width: 18px;
    height: 18px;
    display: block;
    margin-left: 1px;
}
.listes {
    height: 22px;
    margin: 18px 0 0 36px;
    padding-right: 6px;
    border-right: 1px solid #9c9fa0;
}
.mode {
    width: 108px;
    height: 46px;
    margin: 2px -2px 0 auto;
    padding: 0 0 0 3px;
    border: 1px solid #a9abac;
    border-bottom-width: 2px;
}
.mode legend {
    margin-left: 5px;
    padding: 0 4px;
    font-style: italic;
    color: #93199b;
}
.mode strong {
    color: #a01414;
}

/* grilles */
.grid-box {
    display: flex;
    flex-direction: column;
    background: #fff;
    border: 2px solid #808283;
    border-right-width: 1px;
}
.list-box {
    flex: 1;
    margin: 3px 4px 2px 3px;
    border-left-width: 1px;
}
.grid-main {
    display: flex;
    flex: 1;
    min-height: 0;
}
.grid-view {
    flex: 1;
    min-width: 0;
    overflow: hidden;
}
.grid {
    width: 100%;
    table-layout: fixed;
    border-collapse: collapse;
}
.grid th, .grid td {
    padding: 0 0 0 3px;
    white-space: nowrap;
    overflow: hidden;
    text-align: left;
}
.grid th {
    height: 29px;
    background: #3a68ff;
    border-bottom: 1px solid #8fb0ff;
    color: #fff;
    font-family: "Open Sans", sans-serif;
    font-weight: 600;
}
.grid td {
    height: 28px;
}
.grid th:first-child, .grid td:first-child {
    background: #eff0f0;
    border: none;
    padding: 0;
}
.grid .box {
    margin: 0 auto;
}
.cursor {
    display: block;
    width: 0;
    margin-left: 4px;
    border: 7px solid transparent;
    border-left-color: #000;
    border-right-width: 0;
}
.contacts {
    height: 404px;
}
.contacts td:nth-child(2), .contacts td:nth-child(7), .interlocuteurs td:nth-child(6) {
    text-align: right;
    padding-right: 3px;
}
.contacts td:nth-child(7) {
    padding-right: 9px;
}
.contacts td:nth-child(9), .contacts td:nth-child(10) {
    padding: 0;
}
.contacts td:nth-child(10) svg {
    width: 16px;
    height: 28px;
    display: block;
}
.contacts td:nth-child(12) {
    background: #fffdd8;
    color: #2a22f0;
    font-family: Lato, sans-serif;
    font-weight: bold;
    text-align: center;
}
.contacts td:nth-child(13) {
    font-size: 11px;
    font-weight: bold;
}
.contacts td:nth-child(14) {
    font-style: italic;
}
.contacts td:nth-child(15) {
    background: #fffee9;
    font-size: 11px;
    font-weight: bold;
}
.contacts td:nth-child(17) {
    background: #cdead6;
    color: #2a22f0;
}
.contacts td:nth-child(19) {
    overflow: visible;
}
.contacts th:nth-child(12), .contacts th:nth-child(15), .contacts th:nth-child(17), .contacts th:nth-child(18), .contacts th:nth-child(19),
.interlocuteurs th:nth-child(8), .interlocuteurs th:nth-child(9), .interlocuteurs th:nth-child(10), .interlocuteurs th:nth-child(12), .interlocuteurs th:nth-child(13),
.interlocuteurs td:nth-child(9) {
    text-align: center;
}
.interlocuteurs td {
    height: 29px;
}
.interlocuteurs td:nth-child(8), .interlocuteurs td:nth-child(9) {
    font-size: 14px;
    font-weight: bold;
}
.principal td {
    font-weight: bold;
}
.grid .selected td:nth-child(n+2) {
    background: #66babd;
    color: #effafa;
}
.w12 { width: 12px; }
.w13 { width: 13px; }
.w17 { width: 17px; }
.w25 { width: 25px; }
.w41 { width: 41px; }
.w42 { width: 42px; }
.w43 { width: 43px; }
.w47 { width: 47px; }
.w54 { width: 54px; }
.w57 { width: 57px; }
.w60 { width: 60px; }
.w61 { width: 61px; }
.w73 { width: 73px; }
.w76 { width: 76px; }
.w79 { width: 79px; }
.w81 { width: 81px; }
.w82 { width: 82px; }
.w84 { width: 84px; }
.w86 { width: 86px; }
.w105 { width: 105px; }
.w108 { width: 108px; }
.w118 { width: 118px; }
.w125 { width: 125px; }
.w145 { width: 145px; }
.w163 { width: 163px; }
.w202 { width: 202px; }
.w235 { width: 235px; }
.w249 { width: 249px; }
.w273 { width: 273px; }
.w309 { width: 309px; }
.w314 { width: 314px; }
.w372 { width: 372px; }
.w507 { width: 507px; }

/* ascenseurs */
.vbar {
    width: 19px;
    flex: none;
    display: flex;
    flex-direction: column;
    align-items: center;
    justify-content: space-between;
    padding: 8px 0;
    background: #eff0f0;
}
.vbar svg {
    width: 10px;
    height: 8px;
}
.vbar .thumb {
    width: 18px;
    background: #cacbcb;
}
.thumb.mid {
    height: 21px;
}
.thumb.tall {
    height: 127px;
    margin-bottom: 34px;
}
.hbar {
    display: flex;
    align-items: center;
    height: 19px;
    padding: 0 26px 0 6px;
    background: #eeefef;
}
.hbar svg {
    width: 8px;
    height: 10px;
}
.hbar .thumb {
    width: 20px;
    height: 19px;
    margin-left: 7px;
    margin-right: auto;
    background: #cacbcb;
}

/* détail */
.detail {
    height: 122px;
    background: #a9abac;
    padding-top: 5px;
}
.detail-top {
    display: flex;
    height: 86px;
    border-top: 2px solid #86888a;
}
.ident {
    width: 240px;
    line-height: 18px;
    color: #7c1b20;
}
.nom {
    padding-left: 19px;
    margin-bottom: 2px;
}
.ident dl {
    display: grid;
    grid-template-columns: 72px 1fr;
    column-gap: 4px;
    grid-auto-rows: 18px;
}
.ident dt {
    text-align: right;
    font-weight: bold;
    color: #111;
}
.dossiers {
    display: flex;
    align-items: flex-end;
    width: 178px;
    padding: 0 0 7px 20px;
}
.dossier-icons {
    display: grid;
    grid-template-columns: 20px 20px 18px;
    column-gap: 10px;
    row-gap: 10px;
    justify-items: center;
    align-items: center;
    margin-left: 26px;
}
.dossier-icons svg {
    width: 20px;
    height: 20px;
}
.dossier-icons .low {
    height: 14px;
}
.adresse {
    display: flex;
    gap: 12px;
    width: 623px;
    padding-top: 3px;
    line-height: 17px;
}
.adresse b {
    font-size: 14px;
}
.adresse address {
    font-style: normal;
    color: #7c1b20;
}
.zone-title {
    padding-top: 15px;
    font-family: "Liberation Serif", "Times New Roman", serif;
    font-size: 64px;
    line-height: 76px;
    font-weight: normal;
    color: #000;
}
.phones {
    display: grid;
    grid-template-columns: 523px 73px 278px 335px 1fr;
    align-items: center;
    height: 30px;
    padding-left: 20px;
}
.phones svg {
    width: 20px;
    height: 20px;
}
.phones p {
    display: flex;
    align-items: center;
    gap: 8px;
}
.tel, .fax {
    font-size: 15px;
}
.tel {
    margin-left: 4px;
    color: #2a24d8;
}
.tel.strong {
    color: #1a14d0;
    font-weight: bold;
}

/* notes */
.notes {
    display: flex;
    height: 193px;
    background: #fff;
    padding-right: 3px;
    margin-bottom: 4px;
}
.notes-text {
    flex: 1;
    padding: 31px 4px 0 4px;
    line-height: 17px;
}
.notes-text p {
    height: 17px;
}
.notes-text b {
    font-size: 14px;
}
.note-title {
    font-size: 14px;
    font-weight: bold;
    color: #1c8080;
    text-decoration: underline;
}
.note-title mark {
    background: #ffff30;
    color: #1d8a1d;
}

/* services */
.services {
    margin: 0 3px 0 4px;
    border-top: 2px solid #b4b6b7;
}
.services .tabs {
    height: 33px;
}
.services .tab.active {
    background: #f0f1f1;
}
.services-panel {
    padding: 3px 4px 3px 3px;
    border-top: 1px solid #e2e5e6;
    border-right: 2px solid #808283;
    border-bottom: 3px solid #808283;
}
.services .grid-box {
    border-left-width: 1px;
}
.services .grid-main {
    flex: none;
    height: 152px;
}

/* état */
.status-bar {
    display: flex;
    height: 34px;
    margin-top: 2px;
    padding: 4px 3px 2px 13px;
    border-top: 2px solid #77797a;
}
.status-bar::before {
    content: "";
    width: 3px;
    margin-left: -9px;
    margin-right: 4px;
    border-left: 1px solid #b4b6b7;
    border-right: 1px solid #b4b6b7;
}
.status-main {
    flex: 1;
    border: 1px solid #c9cbcc;
    border-top: 2px solid #b4b6b7;
}
.status-side {
    width: 73px;
    margin-left: 2px;
    background: #eeefef;
    border-left: 1px solid #a9abac;
    border-top: 2px solid #b4b6b7;
}
```
